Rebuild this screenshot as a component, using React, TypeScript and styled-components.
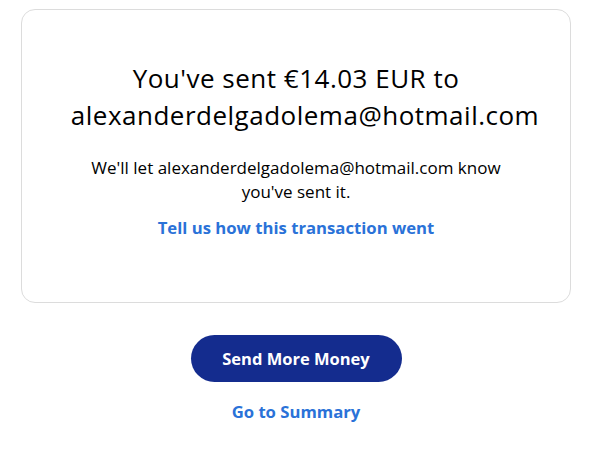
import { createGlobalStyle, styled } from "styled-components";

const GlobalStyle = createGlobalStyle`
  body {
    margin: 0;
    background: #fff;
    font-family: "Open Sans", "Noto Sans", sans-serif;
    color: #001435;
  }
`;

const Page = styled.div`
  display: flex;
  flex-direction: column;
  align-items: center;
  padding: 9px 18px 0 21px;
`;

const Card = styled.div`
  box-sizing: border-box;
  width: 550px;
  height: 294px;
  border: 1px solid #dcdcdc;
  border-radius: 14px;
  display: flex;
  flex-direction: column;
  align-items: center;
  padding: 50px 24px 0;
  text-align: center;
`;

const Title = styled.h1`
  margin: 0;
  font-size: 26px;
  font-weight: 400;
  letter-spacing: 0.5px;
  line-height: 37px;
  color: #000;
`;

const Recipient = styled.span`
  display: inline-block;
  padding-left: 18px;
`;

const Message = styled.p`
  margin: 22px 0 0;
  font-size: 17px;
  line-height: 24px;
  max-width: 430px;
  color: #000;
`;

const TextLink = styled.a<{ $top?: number }>`
  display: block;
  margin-top: ${(p) => p.$top ?? 12}px;
  font-size: 16.7px;
  font-weight: 700;
  color: #2a72d8;
  text-decoration: none;
  cursor: pointer;
`;

const PrimaryButton = styled.button`
  margin-top: 32px;
  width: 211px;
  height: 47px;
  border: 0;
  border-radius: 24px;
  background: #142c8e;
  color: #fff;
  font-family: inherit;
  font-size: 16.5px;
  font-weight: 700;
  cursor: pointer;
`;

export default function App() {
  return (
    <>
      <GlobalStyle />
      <Page>
        <Card>
          <Title>
            You've sent €14.03 EUR to
            <br />
            <Recipient>alexanderdelgadolema@hotmail.com</Recipient>
          </Title>
          <Message>We'll let alexanderdelgadolema@hotmail.com know you've sent it.</Message>
          <TextLink>Tell us how this transaction went</TextLink>
        </Card>
        <PrimaryButton>Send More Money</PrimaryButton>
        <TextLink $top={18}>Go to Summary</TextLink>
      </Page>
    </>
  );
}
